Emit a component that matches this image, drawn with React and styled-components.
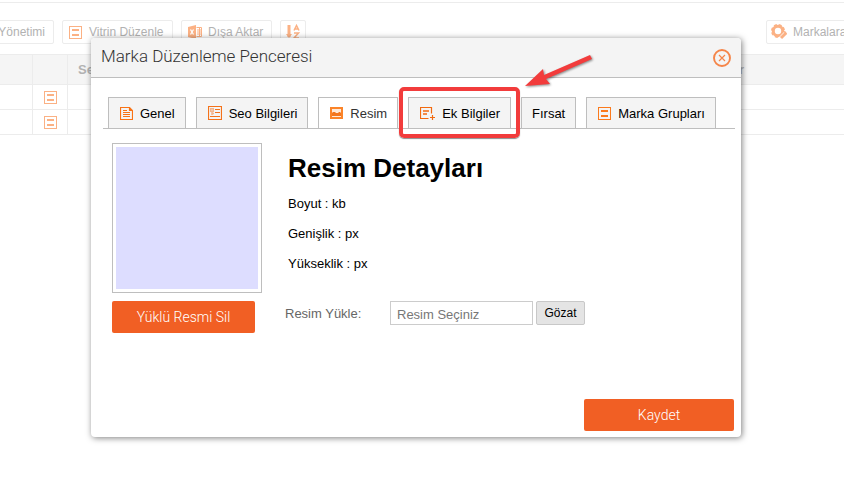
import React from 'react';
import styled, { createGlobalStyle } from 'styled-components';

const Global = createGlobalStyle`
  * { box-sizing: border-box; }
  body { margin: 0; background: #fff; font: 13px/16px "Liberation Sans", Arial, sans-serif; color: #000; overflow: hidden; }
  button, input { font: inherit; margin: 0; }
  svg { display: block; flex: none; }
`;

const Page = styled.div`
  position: relative;
  min-height: 100vh;
`;
const Backdrop = styled.main`
  padding-top: 2px;
  color: #b2b2b2;
`;
const Toolbar = styled.div`
  display: flex;
  gap: 8px;
  height: 52px;
  padding-top: 17px;
  border-top: 1px solid #ececec;
  overflow: hidden;
`;
const Spacer = styled.div`
  flex: 1;
`;
const ToolButton = styled.button`
  display: flex;
  align-items: center;
  justify-content: ${p => p.$align || 'flex-start'};
  gap: ${p => p.$gap ?? 6}px;
  flex: none;
  width: ${p => p.$width}px;
  height: 24px;
  padding: 0 ${p => p.$pad ?? 6}px;
  border: 1px solid #ececec;
  border-radius: 2px;
  margin-left: ${p => (p.$cutLeft ? -30 : 0)}px;
  margin-right: ${p => (p.$cutRight ? -30 : 0)}px;
  background: #fff;
  color: #b2b2b2;
  font-size: 12px;
  white-space: nowrap;
`;
const Table = styled.table`
  width: 100%;
  table-layout: fixed;
  border-collapse: separate;
  border-spacing: 0;
  border-top: 1px solid #ececec;
`;
const Th = styled.th`
  width: ${p => p.$width || 'auto'};
  height: 30px;
  padding: 0 ${p => p.$right || 0} 0 10px;
  text-align: ${p => (p.$right ? 'right' : 'left')};
  background: #f5f5f5;
  border-bottom: 1px solid #ececec;
  border-right: ${p => (p.$divider ? '1px solid #ececec' : '0')};
`;
const Td = styled.td`
  height: 25px;
  padding: 0 0 0 11px;
  border-bottom: 1px solid #ececec;
  border-right: ${p => (p.$divider ? '1px solid #ececec' : '0')};
`;

const Dialog = styled.section`
  position: absolute;
  top: 38px;
  left: 91px;
  right: 103px;
  display: flex;
  flex-direction: column;
  min-height: 399px;
  border-radius: 4px;
  background: #fff;
  box-shadow: 1px 1px 6px rgba(0, 0, 0, 0.5);
`;
const DialogHeader = styled.header`
  display: flex;
  align-items: center;
  justify-content: space-between;
  height: 40px;
  padding: 0 10px;
  border-bottom: 1px solid #bebebe;
  border-radius: 4px 4px 0 0;
  background: #f4f4f4;
`;
const DialogTitle = styled.h2`
  margin: 0;
  padding-bottom: 4px;
  font: 300 17px/20px Roboto, "Liberation Sans", sans-serif;
  color: #333;
`;
const CloseButton = styled.button`
  padding: 0;
  border: 0;
  background: none;
`;
const Tabs = styled.nav`
  display: flex;
  gap: 10px;
  margin: 19px 6px 0 12px;
  padding-left: 5px;
  border-bottom: 1px solid #bebebe;
`;
const Tab = styled.button`
  position: relative;
  display: flex;
  align-items: center;
  gap: 7px;
  height: 31px;
  padding: ${p => (p.$plain ? '2px 10px 0' : '2px 10px 0 11px')};
  border: 1px solid #bebebe;
  border-bottom: 0;
  background: ${p => (p.$active ? '#fff' : '#f4f4f4')};
  color: ${p => (p.$active ? '#333' : '#000')};
  white-space: nowrap;

  > svg:first-child {
    margin-bottom: 2px;
  }
`;
const Highlight = styled.span`
  position: absolute;
  inset: -11px -10px -10px;
  border: 4px solid #f23c3c;
  border-radius: 5px;
  box-shadow: 0 1px 1px rgba(0, 0, 0, 0.45);
  pointer-events: none;
  z-index: 1;
`;
const Arrow = styled.svg`
  position: absolute;
  left: 114px;
  top: -44px;
  z-index: 2;
  pointer-events: none;
  filter: drop-shadow(1px 1px 1px rgba(0, 0, 0, 0.45));
`;
const Content = styled.div`
  display: flex;
  gap: 26px;
  padding: 14px 21px 0;
`;
const Preview = styled.div`
  width: 150px;
  height: 150px;
  padding: 3px;
  border: 1px solid #bebebe;
  background: #ddddff content-box;
`;
const Details = styled.div`
  padding-top: 10px;
`;
const DetailsTitle = styled.h1`
  margin: 0 0 13px;
  font-size: 26px;
  line-height: 30px;
`;
const Detail = styled.p`
  margin: 0 0 14px;
`;
const UploadRow = styled.form`
  display: flex;
  align-items: flex-start;
  padding: 8px 21px 0;
`;
const ActionButton = styled.button`
  width: ${p => p.$width}px;
  height: 32px;
  padding: 0;
  border: 0;
  border-radius: 2px;
  background: #f15f24;
  color: #fff;
  font: 300 14px/20px Roboto, "Liberation Sans", sans-serif;
`;
const Label = styled.label`
  width: 105px;
  margin-left: 30px;
  line-height: 26px;
  color: #666;
`;
const FileName = styled.input`
  width: 143px;
  height: 24px;
  padding: 2px 6px 0;
  border: 1px solid #ccc;
  border-radius: 0;
  &::placeholder { color: #777; opacity: 1; }
`;
const BrowseButton = styled.button`
  width: 49px;
  height: 24px;
  margin-left: 3px;
  padding: 0;
  border: 1px solid #c8c8c8;
  border-radius: 2px;
  background: #e4e4e4;
  font-size: 12px;
`;
const Footer = styled.footer`
  display: flex;
  justify-content: flex-end;
  margin-top: auto;
  padding: 0 7px 6px;
`;

const ListIcon = ({ color = '#fb7a1c' }) => (
  <svg width="13" height="13" viewBox="0 0 13 13" fill={color} aria-hidden="true">
    <path d="M0 0h13v13H0zM1 1v11h11V1z" fillRule="evenodd" />
    <path d="M3 3h7v2H3zM3 8h7v2H3z" />
  </svg>
);
const DocIcon = () => (
  <svg width="13" height="13" viewBox="0 0 13 13" fill="none" stroke="#f97316" strokeWidth="1.200" aria-hidden="true">
    <path d="M.5.5h9l3 3v9H.5zM9.5.5v3h3M3 3.500h4M3 5.500h7M3 7.500h7M3 9.500h7" />
  </svg>
);
const SeoIcon = () => (
  <svg width="14" height="14" viewBox="0 0 14 14" fill="none" stroke="#f4721a" strokeWidth="1.200" aria-hidden="true">
    <path d="M.5.5h13v13H.5zM7 3.500h5M7 6.500h5M2 10.500h10" />
    <path d="M2.700 2.700h2.600v2.600H2.700zM4 5.500v3.500M4 7.500h2" stroke="#f3b58d" strokeWidth="1.500" />
  </svg>
);
const ImageIcon = () => (
  <svg width="13" height="12" viewBox="0 0 13 12" aria-hidden="true">
    <path d="M0 0h13v12H0z" fill="#fb8429" />
    <path d="M2 2h9v8H2z" fill="#ffe9d8" />
    <path d="M2 9V6l1-1h2l1 1h2l1-1h1l1 1v3z" fill="#f3761f" />
  </svg>
);
const AddIcon = () => (
  <svg width="15" height="13" viewBox="0 0 15 13" fill="none" stroke="#f26a10" aria-hidden="true">
    <path d="M8.500 11.500H.5V.5h11V6.500" strokeWidth="1.200" />
    <path d="M3 4h6M3 7h4" strokeWidth="1.600" />
    <path d="M12.500 8v5M10 10.500h5" strokeWidth="1.200" />
  </svg>
);
const ExcelIcon = () => (
  <svg width="14" height="14" viewBox="0 0 14 14" fill="#fbb184" aria-hidden="true">
    <path d="M0 2l8-2v14l-8-2z" />
    <path d="M8.500 2.500h5v9h-5M9 5h4M9 7h4M9 9h4M11.500 3v8" fill="none" stroke="#fbb184" />
    <path d="M2.500 4.500l3 5M5.500 4.500l-3 5" stroke="#fff" strokeWidth="1.300" />
  </svg>
);
const SortIcon = () => (
  <svg width="14" height="16" viewBox="0 0 14 16" fill="none" stroke="#fbb184" aria-hidden="true">
    <path d="M3 1v12" strokeWidth="3" />
    <path d="M0 10h6l-3 4z" fill="#fbb184" stroke="none" />
    <path d="M8 6.500l2.500-5 2.500 5M9 5h3M8 9h4.500l-4.500 5h5" strokeWidth="1.500" />
  </svg>
);
const GearIcon = () => (
  <svg width="17" height="16" viewBox="0 0 17 16" fill="none" stroke="#fbb184" aria-hidden="true">
    <circle cx="7" cy="7" r="4.700" strokeWidth="3" />
    <circle cx="7" cy="7" r="6.300" strokeWidth="1.400" strokeDasharray="3 1.950" />
    <path d="M9 15l6-6" stroke="#fff" strokeWidth="4" />
    <path d="M10 14l5-5" strokeWidth="3" />
    <path d="M13.500 7.500l2 2.500" strokeWidth="1.500" />
  </svg>
);
const CloseIcon = () => (
  <svg width="18" height="18" viewBox="0 0 18 18" fill="none" stroke="#f58549" aria-hidden="true">
    <circle cx="9" cy="9" r="8" strokeWidth="1.900" />
    <path d="M6 6l6 6M12 6l-6 6" strokeWidth="1.200" />
  </svg>
);

const tabs = [
  { label: 'Genel', Icon: DocIcon },
  { label: 'Seo Bilgileri', Icon: SeoIcon },
  { label: 'Resim', Icon: ImageIcon, active: true },
  { label: 'Ek Bilgiler', Icon: AddIcon, highlighted: true },
  { label: 'Fırsat' },
  { label: 'Marka Grupları', Icon: ListIcon },
];

export default function App() {
  return (
    <Page>
      <Global />
      <Backdrop>
        <Toolbar>
          <ToolButton $width={84} $cutLeft $align="flex-end" $pad={8}>Yönetimi</ToolButton>
          <ToolButton $width={111} $gap={7}><ListIcon color="#fbb184" />Vitrin Düzenle</ToolButton>
          <ToolButton $width={91}><ExcelIcon />Dışa Aktar</ToolButton>
          <ToolButton $width={26} $pad={5} aria-label="Sırala"><SortIcon /></ToolButton>
          <Spacer />
          <ToolButton $width={108} $cutRight $pad={4} $gap={5}><GearIcon />Markalara</ToolButton>
        </Toolbar>
        <Table>
          <thead>
            <tr>
              <Th $width="33px" $divider />
              <Th $width="35px" $divider />
              <Th>Se</Th>
              <Th $right="100px">r</Th>
            </tr>
          </thead>
          <tbody>
            {[1, 2].map(row => (
              <tr key={row}>
                <Td $divider />
                <Td $divider><ListIcon color="#fbb184" /></Td>
                <Td />
                <Td />
              </tr>
            ))}
          </tbody>
        </Table>
      </Backdrop>
      <Dialog role="dialog" aria-labelledby="dialog-title">
        <DialogHeader>
          <DialogTitle id="dialog-title">Marka Düzenleme Penceresi</DialogTitle>
          <CloseButton type="button" aria-label="Kapat"><CloseIcon /></CloseButton>
        </DialogHeader>
        <Tabs>
          {tabs.map(({ label, Icon, active, highlighted }) => (
            <Tab key={label} type="button" $active={active} $plain={!Icon}>
              {Icon && <Icon />}
              {label}
              {highlighted && (
                <>
                  <Highlight />
                  <Arrow width="72" height="36" viewBox="0 0 72 36" fill="#f23c3c" aria-hidden="true">
                    <path d="M2 32L20 15l1 6L67 1l2 4L23 25l4 5z" />
                  </Arrow>
                </>
              )}
            </Tab>
          ))}
        </Tabs>
        <Content>
          <Preview />
          <Details>
            <DetailsTitle>Resim Detayları</DetailsTitle>
            <Detail>Boyut : kb</Detail>
            <Detail>Genişlik : px</Detail>
            <Detail>Yükseklik : px</Detail>
          </Details>
        </Content>
        <UploadRow>
          <ActionButton type="button" $width={143}>Yüklü Resmi Sil</ActionButton>
          <Label htmlFor="file-name">Resim Yükle:</Label>
          <FileName id="file-name" placeholder="Resim Seçiniz" />
          <BrowseButton type="button">Gözat</BrowseButton>
        </UploadRow>
        <Footer>
          <ActionButton type="button" $width={150}>Kaydet</ActionButton>
        </Footer>
      </Dialog>
    </Page>
  );
}
